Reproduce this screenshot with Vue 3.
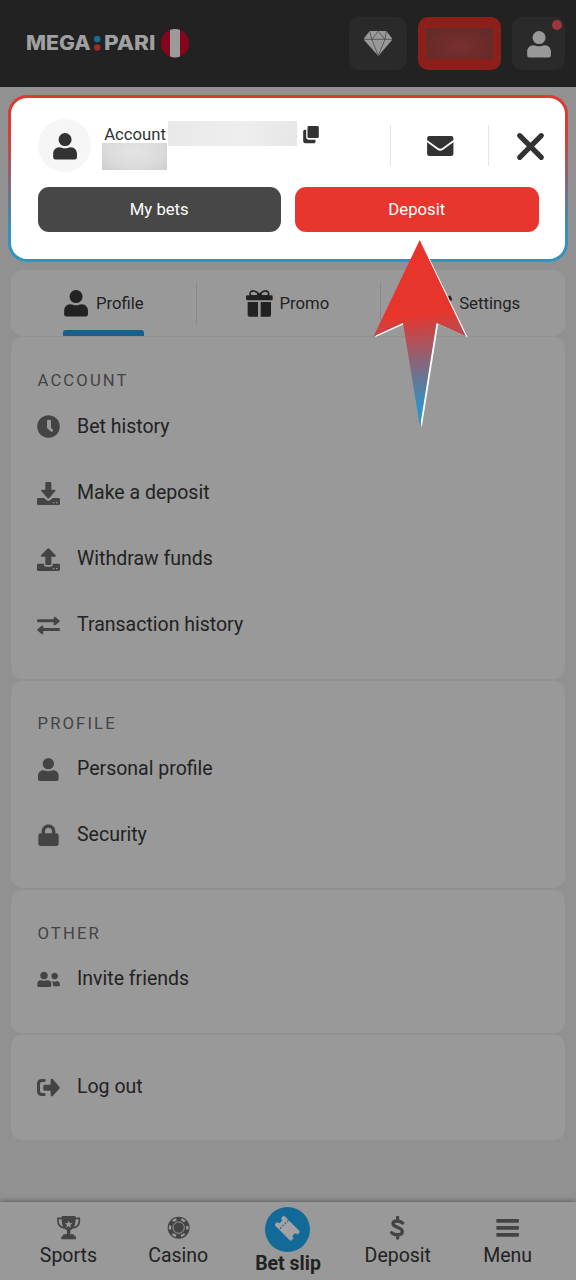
<script setup>
const person = 'M34 0a17 17 0 1 1 0 34a17 17 0 1 1 0-34z M19 37c6 0 8 3 15 3s9-3 15-3c10 0 16 8 16 17v9q0 6-6 6H9q-6 0-6-6v-9c0-9 6-17 16-17z'

const icons = {
  clock: 'M34.500 .5a34 34 0 1 0 .01 0z M34 14a4 4 0 0 0-4 4v19q0 3 3 5l8 7a4 4 0 0 0 6-6l-5-4V18a4 4 0 0 0-4-4z',
  deposit: 'M28 0h12q3 0 3 3v20h10q5 0 2 4L37 48q-3 3-6 0L13 27q-3-4 2-4h10V3q0-3 3-3z M4 48h17l8 7q5 4 10 0l8-7h18q4 0 4 4v13q0 4-4 4H4q-4 0-4-4V52q0-4 4-4z M48 60v4h4v-4z M57 60v4h4v-4z',
  withdraw: 'M31 2q3-3 6 0l19 20q3 4-2 4H43v22q0 3-3 3H28q-3 0-3-3V26H14q-5 0-2-4z M4 47h17v3q0 6 6 6h14q6 0 6-6v-3h18q4 0 4 4v14q0 4-4 4H4q-4 0-4-4V51q0-4 4-4z M48 60v4h4v-4z M57 60v4h4v-4z',
  transfer: 'M3 16h47v-5q1-4 5-2l12 10q3 2 0 5L55 33q-5 2-5-2v-6H3q-3 0-3-4.500t3-4.500z M66 42H19v-5q-1-4-5-2L2 45q-3 2 0 5l12 10q5 2 5-2v-7h47q3 0 3-4.500t-3-4.500z',
  person,
  lock: 'M11 28h3v-6c0-27 41-27 41 0v6h3q7 0 7 7v24q0 7-7 7H11q-7 0-7-7V35q0-7 7-7z M24 28h21v-6c0-14-21-14-21 0z',
  friends: 'M21 11a11.500 11.500 0 1 1-.01 0z M53 14a10 10 0 1 1-.01 0z M12 37c4 0 5 2 9.500 2s5.500-2 9.500-2c8 0 12 5 12 11v5q0 4-5 4H5q-4 0-4-4v-5c0-6 4-11 11-11z M43 39q5 2 9 2t9-2q8 2 8 10v3q0 3-4 3H48v-7q0-5-5-9z',
  logout: 'M15 9h7q4 0 4 4.500t-4 4.500h-7q-6 0-6 6v21q0 6 6 6h7q4 0 4 4.500t-4 4.500h-7Q0 60 0 45V24Q0 9 15 9z M23 26h18V11q1-5 6-2l20 23q3 3 0 6L47 60q-5 3-6-2V44H23q-4 0-4-4V30q0-4 4-4z',
}

const sections = [
  { id: 'account', title: 'ACCOUNT', items: [
    { icon: 'clock', label: 'Bet history' },
    { icon: 'deposit', label: 'Make a deposit' },
    { icon: 'withdraw', label: 'Withdraw funds' },
    { icon: 'transfer', label: 'Transaction history' },
  ] },
  { id: 'profile', title: 'PROFILE', items: [
    { icon: 'person', label: 'Personal profile' },
    { icon: 'lock', label: 'Security' },
  ] },
  { id: 'other', title: 'OTHER', items: [{ icon: 'friends', label: 'Invite friends' }] },
  { id: 'leave', title: '', items: [{ icon: 'logout', label: 'Log out' }] },
]
</script>

<template>
  <div class="page">
    <header class="header">
      <svg class="logo" viewBox="0 0 170 34" width="170" height="34">
        <g class="wordmark">
          <text x="0" y="24.400" textLength="64.500" lengthAdjust="spacingAndGlyphs">MEGA</text>
          <text x="78" y="24.400" textLength="51.500" lengthAdjust="spacingAndGlyphs">PARI</text>
        </g>
        <circle cx="71.200" cy="13" r="3.200" fill="#176f98" />
        <circle cx="71.200" cy="21.500" r="3.200" fill="#a12b25" />
        <clipPath id="flag"><circle cx="149" cy="17.300" r="14.200" /></clipPath>
        <g clip-path="url(#flag)">
          <path d="M134 2h30v31h-30z" fill="#85061c" />
          <path d="M144 2h10v31h-10z" fill="#9b9b9b" />
        </g>
      </svg>
      <div class="tile gem">
        <svg viewBox="0 0 84 75" width="28" height="25">
          <path d="M17 0H67L84 22v5L43 75 0 27v-5z" fill="#999" />
          <path d="M0 25H84M43 1 23 25 43 73 63 25zM17 1l6 24M67 1l-4 24" fill="none" stroke="#444" stroke-width="2.200" />
        </svg>
      </div>
      <div class="tile balance"><span class="balance-mask"></span></div>
      <div class="tile user">
        <svg viewBox="0 0 69 69" width="26.500" height="26.500"><path :d="person" fill="#999" /></svg>
        <i class="dot"></i>
      </div>
    </header>

    <section class="popup">
      <div class="popup-top">
        <div class="avatar"><svg viewBox="0 0 69 69" width="26.500" height="26.500"><path :d="person" /></svg></div>
        <div class="account-info">
          <div class="account-line">
            <span>Account</span><i class="mask-id"></i>
            <svg viewBox="0 0 47 52" width="16" height="17.300">
              <path d="M17 0H43q4 0 4 4V32q0 4-4 4H17q-4 0-4-4V4q0-4 4-4z M5 11H9V34q0 7 7 7H37v6q0 5-5 5H6q-6 0-6-6V16q0-5 5-5z" />
            </svg>
          </div>
          <i class="mask-sum"></i>
        </div>
        <div class="mail">
          <svg viewBox="0 0 79 60" width="26.500" height="20">
            <path d="M7 0H72q7 0 7 7v5L46 36q-6 5-13 0L0 12V7Q0 0 7 0z M0 19 31 41q8 6 17 0L79 19V53q0 7-7 7H7q-7 0-7-7z" />
          </svg>
        </div>
        <svg class="close" viewBox="0 0 80 80" width="27" height="27"><path d="M8 8 72 72M72 8 8 72" fill="none" stroke="#333" stroke-width="15.500" stroke-linecap="round" /></svg>
      </div>
      <div class="popup-actions">
        <button class="btn dark">My bets</button>
        <button class="btn red">Deposit</button>
      </div>
    </section>

    <nav class="tabs">
      <div class="tab">
        <div class="tab-inner active">
          <svg viewBox="0 0 69 69" width="26.500" height="26.500"><path :d="person" /></svg>
          <span>Profile</span>
        </div>
      </div>
      <div class="tab promo">
        <div class="tab-inner">
          <svg viewBox="0 0 80 80" width="26.700" height="26.700">
            <path d="M4 16H76q4 0 4 4v7q0 4-4 4H4q-4 0-4-4v-7q0-4 4-4z M5 36H36V80H10q-5 0-5-5z M44 36H75V75q0 5-5 5H44z" />
            <path d="M40 15C30 18 12 22 12 11S30-1 40 15C50-1 68 0 68 11S50 18 40 15z" fill="none" stroke="#222" stroke-width="5" />
            <path d="M33 9h14v9H33z" />
          </svg>
          <span>Promo</span>
        </div>
      </div>
      <div class="tab settings">
        <div class="tab-inner">
          <svg viewBox="0 0 80 80" width="26" height="26">
            <circle cx="40" cy="40" r="23" fill="none" stroke="#222" stroke-width="18" />
            <circle cx="40" cy="40" r="34" fill="none" stroke="#222" stroke-width="10" stroke-dasharray="15 20.600" stroke-dashoffset="24" />
          </svg>
          <span>Settings</span>
        </div>
      </div>
    </nav>

    <section v-for="s in sections" :key="s.id" class="card" :class="s.id">
      <h2 v-if="s.title">{{ s.title }}</h2>
      <div v-for="item in s.items" :key="item.label" class="row">
        <svg viewBox="0 0 69 69" width="23" height="23"><path :d="icons[item.icon]" fill-rule="evenodd" /></svg>
        <span>{{ item.label }}</span>
      </div>
    </section>

    <footer class="bottom">
      <div class="nav-item">
        <svg viewBox="0 0 70 70" width="23.300" height="23.300">
          <path d="M17 7H3v8q0 17 18 21M53 7H67v8q0 17-18 21" fill="none" stroke="#444" stroke-width="5" />
          <path fill-rule="evenodd" d="M17 0H53q3 0 3 4c0 21-3 34-16 39V55h7q6 0 6 6h2q2 0 2 3v6H13v-6q0-3 2-3h2q0-6 6-6h7V43C17 38 14 25 14 4q0-4 3-4z M35 14l-3 7-8 1 6 5-2 8 7-4 7 4-2-8 6-5-8-1z" />
        </svg>
        <span>Sports</span>
      </div>
      <div class="nav-item">
        <svg viewBox="0 0 70 70" width="23.300" height="23.300">
          <circle cx="35" cy="35" r="33" />
          <circle cx="35" cy="35" r="26" fill="none" stroke="#999" stroke-width="7" stroke-dasharray="12 15.230" stroke-dashoffset="6" />
          <circle cx="35" cy="35" r="17" fill="none" stroke="#999" stroke-width="3" />
        </svg>
        <span>Casino</span>
      </div>
      <div class="nav-item slip">
        <div class="slip-circle">
          <svg viewBox="0 0 134 134" width="45" height="45">
            <g transform="translate(68 65) rotate(45)">
              <path d="M-33-20H28q4 0 4 4V-8a8 8 0 0 0 0 16V16q0 4-4 4H-33q-4 0-4-4V8a8 8 0 0 0 0-16V-16q0-4 4-4z" fill="#a2a2a2" />
              <path d="M-17-20V21" stroke="#126188" stroke-width="3" stroke-dasharray="6 4" />
            </g>
          </svg>
        </div>
        <span>Bet slip</span>
      </div>
      <div class="nav-item">
        <svg viewBox="0 0 70 70" width="23.300" height="23.300">
          <path d="M50 21C42 13 21 12 21 23.500S49 33 49 46.500S26 58 17 50M35 4V14M35 56V66" fill="none" stroke="#444" stroke-width="10" stroke-linecap="round" />
        </svg>
        <span>Deposit</span>
      </div>
      <div class="nav-item">
        <svg viewBox="0 0 70 70" width="23.300" height="23.300">
          <rect x="1" y="9" width="68" height="11" rx="2" /><rect x="1" y="30" width="68" height="11" rx="2" /><rect x="1" y="51" width="68" height="11" rx="2" />
        </svg>
        <span>Menu</span>
      </div>
    </footer>

    <svg class="arrow" viewBox="0 0 100 192" width="100" height="192">
      <defs>
        <linearGradient id="pointer" gradientUnits="userSpaceOnUse" x1="47" y1="75" x2="57" y2="168">
          <stop offset="0" stop-color="#e7352c" />
          <stop offset="1" stop-color="#2f93c3" />
        </linearGradient>
      </defs>
      <path d="M51 2 97.700 98.300 68.200 85 51.700 188.500 34.500 85 5 98.300z" fill="#fff" />
      <path d="M49.700 1 96 97.500 66.500 84 50 188 33 84 3.500 97.500z" fill="url(#pointer)" />
    </svg>
  </div>
</template>

<style>
body { background: #919191; }
</style>

<style scoped>
.page {
  position: relative;
  display: flex;
  flex-direction: column;
  box-sizing: border-box;
  width: 576px;
  height: 1280px;
  overflow: hidden;
  background: #919191;
  color: #222;
  font-family: Roboto, "Liberation Sans", sans-serif;
}
.page * { box-sizing: border-box; }
svg { display: block; flex: none; overflow: visible; fill: #222; }

.header {
  display: flex;
  align-items: flex-start;
  flex: none;
  height: 87px;
  padding: 16.5px 11px 0 25.5px;
  background: #222;
}
.logo { margin: 9.5px 153.5px 0 0; }
.wordmark { fill: #a0a0a0; font: 800 20px Inter, "Open Sans", sans-serif; }
.tile {
  position: relative;
  display: flex;
  align-items: center;
  justify-content: center;
  height: 53.5px;
  border-radius: 10px;
  background: #2a2a2a;
}
.gem { width: 58px; }
.balance { width: 83px; margin: 0 11px; background: #8c1f1a; }
.balance-mask { width: 67px; height: 31px; background: radial-gradient(ellipse at 50% 60%, #762f2c 10%, #6c2b29 55%, #5e2b29 100%); }
.user { width: 53.5px; }
.user svg { margin: 1px 0 0 1px; }
.dot { position: absolute; top: 3px; right: 3px; width: 10px; height: 10px; border-radius: 50%; background: #9e373a; }

.popup {
  flex: none;
  width: 560px;
  height: 167px;
  margin: 8px 0 0 8px;
  padding: 20.5px 23px 0 26.500px;
  border: 3px solid transparent;
  border-radius: 19px;
  background: linear-gradient(#fff, #fff) padding-box, linear-gradient(#dc3b34 22%, #2f93c3 82%) border-box;
}
.popup svg { fill: #333; }
.popup-top { display: flex; height: 53px; }
.avatar { display: flex; flex: none; align-items: center; justify-content: center; width: 53px; height: 53px; border-radius: 50%; background: #f6f6f6; }
.avatar svg { margin: 2px 0 0 2px; }
.account-info { flex: none; width: 286px; padding: 2.5px 0 0 11.500px; }
.account-line { display: flex; height: 22px; align-items: flex-start; padding-left: 2.2px; font-size: 16.7px; line-height: 27px; color: #333; }
.account-line svg { margin: 4.500px 0 0 6.500px; }
.mask-id { flex: none; width: 129px; height: 25px; margin-left: 1.6px; background: linear-gradient(100deg, #e9e9e9, #eee 60%, #e6e6e6); }
.mask-sum { display: block; width: 65px; height: 27px; background: radial-gradient(ellipse at 50% 30%, #e4e4e4, #dbdbdb 60%, #cdcdcd); }
.account-line span { width: 62.2px; white-space: nowrap; }
.mail {
  display: flex;
  flex: none;
  align-items: center;
  justify-content: center;
  width: 99px;
  height: 41px;
  margin: 6.500px 0 0 13.500px;
  border: solid #e3e3e3;
  border-width: 0 1px;
}
.mail svg { margin-left: 1px; }
.close { margin: 14px 0 0 27.500px; }
.popup-actions { display: flex; gap: 14px; margin-top: 15.5px; }
.btn { flex: none; width: 243.5px; height: 45px; padding: 0; border: 0; border-radius: 11px; color: #fff; font: 16.7px/45px Roboto, sans-serif; }
.dark { background: #474747; }
.red { background: #e8352e; }

.tabs {
  display: flex;
  align-items: center;
  flex: none;
  width: 554px;
  height: 66px;
  margin: 8px 0 1px 11px;
  border-radius: 11px;
  background: #999;
}
.tab { display: flex; justify-content: center; width: 185px; height: 43px; border-left: 1px solid #8a8a8a; }
.tab:first-child { border-color: transparent; }
.tab-inner { display: flex; align-items: center; gap: 6.500px; margin-left: -1px; font-size: 16.7px; }
.promo .tab-inner { margin-left: -2px; gap: 7px; }
.settings .tab-inner { margin-left: 1px; gap: 6px; }
.active { position: relative; }
.active::after { content: ""; position: absolute; left: 0; right: 0; bottom: -11px; height: 5.5px; border-radius: 3px 3px 0 0; background: #12628c; }

.card { flex: none; width: 554px; margin: 0 0 2px 11px; padding: 31.5px 26.500px 0; border-radius: 11px; background: #999; }
.account { height: 341.5px; }
.account h2 { margin-bottom: .4px; }
.profile { height: 207.5px; padding-top: 31px; }
.other { height: 143px; }
.leave { height: 105px; padding-top: 18.5px; }
h2 { height: 24px; margin: 0; color: #444; font-size: 16.7px; font-weight: 400; line-height: 24px; letter-spacing: 2.1px; }
.row { display: flex; align-items: center; gap: 16.5px; height: 66.3px; font-size: 19.5px; }
.row svg { margin: 1.5px 0 0 -.2px; fill: #444; }
.row span { margin-left: .2px; }

.bottom {
  display: flex;
  flex: none;
  height: 78px;
  margin-top: auto;
  padding: 0 13.5px;
  background: #999;
  box-shadow: 0 -1px 5px rgba(0, 0, 0, .35);
}
.nav-item { display: flex; flex-direction: column; align-items: center; width: 110px; padding-top: 14px; font-size: 19.5px; line-height: 24px; }
.nav-item > svg { margin-bottom: 5px; fill: #444; }
.slip { padding-top: 5px; font-weight: 700; }
.slip-circle { width: 45px; height: 45px; border-radius: 50%; background: #126a99; }

.arrow { position: absolute; left: 370px; top: 239px; }
</style>
